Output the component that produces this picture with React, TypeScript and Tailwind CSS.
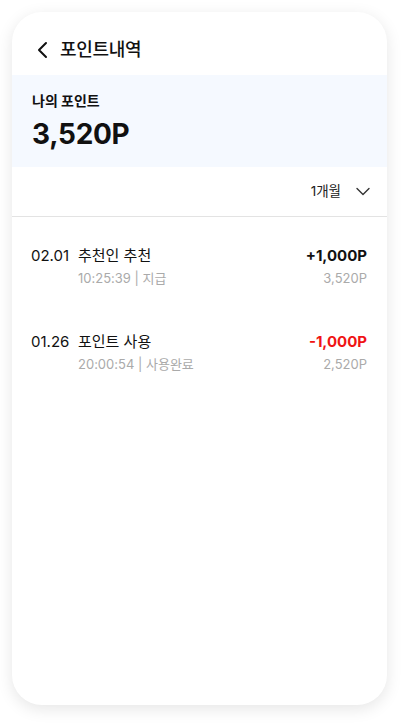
import React from "react";

const font = { fontFamily: "Inter, 'Noto Sans CJK KR', sans-serif" };

const rows = [
  { date: "02.01", title: "추천인 추천", sub: "10:25:39 | 지급", amount: "+1,000P", bal: "3,520P", neg: false },
  { date: "01.26", title: "포인트 사용", sub: "20:00:54 | 사용완료", amount: "-1,000P", bal: "2,520P", neg: true },
];

export default function App() {
  return (
    <div className="w-[405px] h-[723px] bg-white pt-[12px] px-[12px]" style={font}>
      <div className="w-[375px] h-[693px] bg-white rounded-[30px] shadow-[0_4px_16px_rgba(0,0,0,0.10)] overflow-hidden flex flex-col">
        <div className="h-[63px] flex items-center pl-[24px] pt-[12px] gap-[10px]">
          <svg width="14" height="18" viewBox="0 0 14 18" fill="none">
            <path d="M10 2 L3 9 L10 16" stroke="#111" strokeWidth="2" strokeLinecap="round" strokeLinejoin="round" />
          </svg>
          <span className="text-[18px] font-medium text-[#111] tracking-[-0.3px]">포인트내역</span>
        </div>
        <div className="h-[92px] bg-[#f5f9ff] px-[20px] pt-[16px]">
          <div className="text-[14px] font-bold text-[#111] leading-[20px]">나의 포인트</div>
          <div className="text-[28px] font-bold text-[#111] leading-[34px] mt-[6px] tracking-[-0.3px]">3,520P</div>
        </div>
        <div className="h-[50px] flex items-center justify-end pr-[17px] border-b border-[#e3e3e3]">
          <span className="text-[13.5px] text-[#222]">1개월</span>
          <svg className="ml-[15px]" width="14" height="9" viewBox="0 0 14 9" fill="none">
            <path d="M1 1.5 L7 7.5 L13 1.5" stroke="#333" strokeWidth="1.4" strokeLinecap="round" strokeLinejoin="round" />
          </svg>
        </div>
        <div className="flex flex-col pt-[28px]">
          {rows.map((r) => (
            <div key={r.date} className="h-[86px] flex pl-[19px] pr-[20px]">
              <div className="w-[47px] text-[15px] text-[#111] leading-[22px]">{r.date}</div>
              <div className="flex-1">
                <div className="text-[15px] text-[#111] leading-[22px]">{r.title}</div>
                <div className="text-[13px] text-[#aaaaaa] leading-[20px] mt-[1px]">{r.sub}</div>
              </div>
              <div className="flex flex-col items-end">
                <div className={`text-[15px] font-bold leading-[22px] ${r.neg ? "text-[#f01414]" : "text-[#111]"}`}>{r.amount}</div>
                <div className="text-[13px] text-[#aaaaaa] leading-[20px] mt-[1px]">{r.bal}</div>
              </div>
            </div>
          ))}
        </div>
      </div>
    </div>
  );
}
